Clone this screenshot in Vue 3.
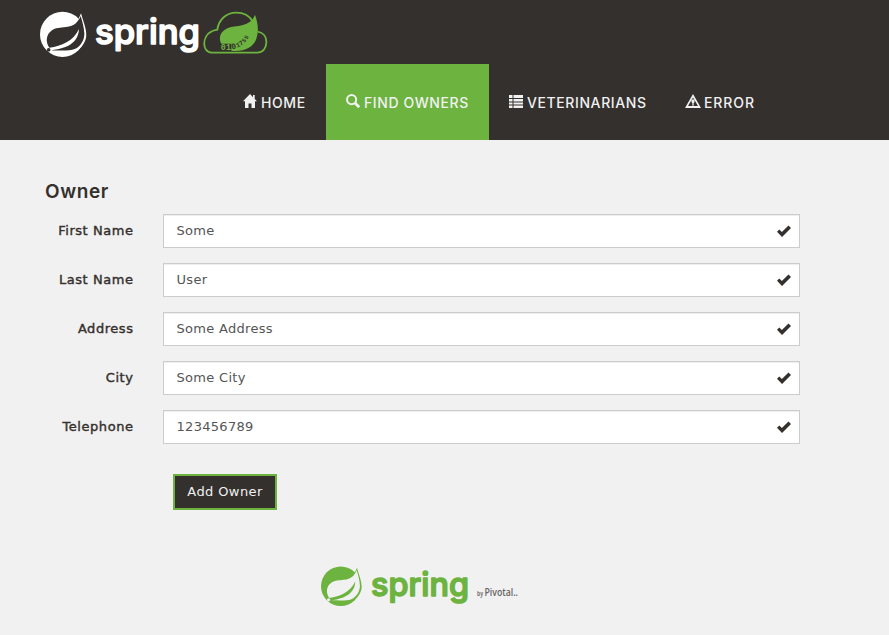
<script setup>
import { ref } from 'vue'

const navItems = [
  { label: 'HOME', icon: 'home' },
  { label: 'FIND OWNERS', icon: 'search', active: true },
  { label: 'VETERINARIANS', icon: 'list' },
  { label: 'ERROR', icon: 'warning' },
]

const fields = ref([
  { id: 'firstName', label: 'First Name', value: 'Some' },
  { id: 'lastName', label: 'Last Name', value: 'User' },
  { id: 'address', label: 'Address', value: 'Some Address' },
  { id: 'city', label: 'City', value: 'Some City' },
  { id: 'telephone', label: 'Telephone', value: '123456789' },
])
</script>

<template>
  <svg class="defs" width="0" height="0" aria-hidden="true">
    <symbol id="leaf" viewBox="0 0 140 140">
      <circle cx="67.500" cy="71" r="67.500" />
      <path d="M123 8 C128 28 139 52 139 74 C137 94 126 109 110 120 L100 60 Z" />
      <path class="leaf-cut" d="M122 16 C114 34 104 46 78 49 C60 51 47 51 35 59 C18 71 16 93 28 111 C65 106 99 92 117 55 C116 80 102 99 76 109 C60 115 45 117 34 119 C62 119 89 121 104 115 C122 106 133 89 133 68 C132 51 127 32 122 16 Z" />
      <circle class="leaf-cut" cx="26" cy="117" r="5.500" />
    </symbol>
  </svg>

  <header class="header">
    <a class="brand">
      <svg class="brand-logo" width="230" height="50" viewBox="0 0 230 50">
        <use class="leaf-light" href="#leaf" x="0" y="0.700" width="46.700" height="46.700" />
        <text class="word word-light" x="55" y="34.300" textLength="105" lengthAdjust="spacingAndGlyphs">spring</text>
        <g class="cloud" transform="translate(150 -5) scale(.33333)">
          <path class="cloud-line" d="M65 143 C33 140 38 91 64 80 C70 76 77 76 82 74 C86 43 110 23 139 23 C161 23 179 34 188 49 M203 80 C220 83 230 96 229 113 C228 131 218 143 202 143 H65" />
          <path class="cloud-leaf" d="M195 29 C187 51 169 60 139 64 C105 67 88 82 90 104 C91 110 92 113 94 116 H124 V137 C160 141 188 128 198 104 C208 78 203 51 195 29 Z" />
          <g class="bits">
            <text x="92" y="136">0</text>
            <text x="108" y="136">1</text>
          </g>
          <g class="bits bits-dark">
            <text class="bit-l" x="125" y="133" transform="rotate(-10 125 133)">0</text>
            <text class="bit-m" x="141" y="128" transform="rotate(-22 141 128)">1</text>
            <text class="bit-m" x="152" y="123" transform="rotate(-36 152 123)">7</text>
            <text class="bit-s" x="163" y="114" transform="rotate(-48 163 114)">5</text>
            <text class="bit-s" x="171" y="104" transform="rotate(-56 171 104)">5</text>
          </g>
        </g>
      </svg>
    </a>
    <nav class="nav">
      <a v-for="item in navItems" :key="item.icon" class="nav-item" :class="[item.icon, { active: item.active }]">
        <svg v-if="item.icon === 'home'" class="icon" viewBox="0 0 14 14"><path d="M7 0 L0 7.300 H2 V14 H5.500 V9.500 H8.500 V14 H12 V7.300 H14 L11.700 4.900 V1 H10 V3.200 Z" /></svg>
        <svg v-else-if="item.icon === 'search'" class="icon" viewBox="0 0 14 14"><circle class="line" cx="5.600" cy="5.600" r="4.600" /><path class="handle" d="M9 9 L13.200 13.200" /></svg>
        <svg v-else-if="item.icon === 'list'" class="icon" viewBox="0 0 14 14"><path d="M0 1h3.500v3H0z M4.500 1H14v3H4.500z M0 5h3.500v2.500H0z M4.500 5H14v2.500H4.500z M0 8.500h3.500v2H0z M4.500 8.500H14v2H4.500z M0 11.500h3.500V14H0z M4.500 11.500H14V14H4.500z" /></svg>
        <svg v-else class="icon" viewBox="0 0 16 14"><path fill-rule="evenodd" d="M8 0 L16 14 H0 Z M8 3.400 L3 12 H13 Z" /><path d="M6.500 5.500h3v2.200L8.700 9.700H7.300L6.500 7.700z M7.100 10.200h1.800v1.300H7.100z" /></svg>
        <span>{{ item.label }}</span>
      </a>
    </nav>
  </header>

  <main class="content">
    <h2>Owner</h2>
    <form class="form" @submit.prevent>
      <div v-for="field in fields" :key="field.id" class="row">
        <label :for="field.id">{{ field.label }}</label>
        <div class="control">
          <input :id="field.id" v-model="field.value" type="text" />
          <svg class="check" viewBox="0 0 14 12"><path d="M0 6.800 L2.300 4.500 L4.900 7 L11.500 .6 L14 3 L5 12 Z" /></svg>
        </div>
      </div>
      <button class="submit" type="submit">Add Owner</button>
    </form>
  </main>

  <footer class="footer">
    <svg width="200" height="48" viewBox="0 0 200 48">
      <use class="leaf-green" href="#leaf" x="0" y="-0.500" width="41" height="41" />
      <text class="word word-green" x="50" y="29.500" textLength="98" lengthAdjust="spacingAndGlyphs">spring</text>
      <text class="by" x="156" y="30" textLength="6" lengthAdjust="spacingAndGlyphs">by</text>
      <text class="pivotal" x="163.500" y="30" textLength="33.500" lengthAdjust="spacingAndGlyphs">Pivotal..</text>
    </svg>
  </footer>
</template>

<style>
body {
  background: #f1f1f1;
}
</style>

<style scoped>
.defs {
  position: absolute;
}
.header {
  height: 140px;
  background: #34302d;
  display: flex;
  flex-direction: column;
  justify-content: space-between;
}
.brand {
  display: block;
  height: 64px;
  padding: 10px 0 0 40px;
  box-sizing: border-box;
}
.brand-logo {
  display: block;
  overflow: visible;
}
.leaf-light {
  fill: #fff;
  --cut: #34302d;
}
.leaf-green {
  fill: #6db33f;
  --cut: #f1f1f1;
}
.leaf-cut {
  fill: var(--cut);
}
.word {
  font-family: Inter, sans-serif;
  font-size: 35px;
  font-weight: 500;
  stroke-width: 1.600px;
  stroke-linejoin: round;
}
.word-light {
  fill: #fff;
  stroke: #fff;
}
.word-green {
  font-size: 33px;
  fill: #6db33f;
  stroke: #6db33f;
}
.cloud-line {
  fill: none;
  stroke: #6db33f;
  stroke-width: 5.500;
}
.cloud-leaf {
  fill: #6db33f;
}
.bits {
  font: bold 25px "Liberation Mono", monospace;
  fill: #6db33f;
}
.bits-dark {
  fill: #34302d;
}
.bit-l {
  font-size: 24px;
}
.bit-m {
  font-size: 20px;
}
.bit-s {
  font-size: 17px;
}
.nav {
  height: 76px;
  display: flex;
  padding-left: 223px;
}
.nav-item {
  display: flex;
  align-items: center;
  gap: 4px;
  box-sizing: border-box;
  padding: 0 0 0 20px;
  color: #f1f1f1;
  font: 500 14px "Inter", sans-serif;
  letter-spacing: 0.600px;
  white-space: nowrap;
}
.nav-item.home {
  width: 103px;
}
.nav-item.search {
  width: 163px;
}
.nav-item.list {
  width: 176px;
}
.nav-item.warning {
  width: 110px;
  gap: 3px;
  letter-spacing: 0.900px;
}
.nav-item.active {
  background: #6db33f;
}
.icon {
  width: 14px;
  height: 14px;
  margin-bottom: 2px;
  fill: #f1f1f1;
  flex: none;
}
.warning .icon {
  width: 16px;
}
.line,
.handle {
  fill: none;
  stroke: #f1f1f1;
  stroke-width: 2;
}
.handle {
  stroke-width: 2.800;
}
.content {
  padding: 40px 89px 0 45px;
}
h2 {
  margin: 0;
  font: 600 19px/23px "Inter", sans-serif;
  color: #34302d;
  letter-spacing: 0.600px;
}
.form {
  margin-top: 11px;
}
.row {
  display: flex;
  align-items: center;
  height: 34px;
  margin-bottom: 15px;
}
label {
  width: 88.500px;
  margin-right: 29.500px;
  padding-bottom: 1px;
  text-align: right;
  color: #34302d;
  font: 13px "DejaVu Sans", sans-serif;
  -webkit-text-stroke: 0.400px #34302d;
  letter-spacing: 0.550px;
  white-space: nowrap;
}
.control {
  flex: 1;
  height: 34px;
  box-sizing: border-box;
  display: flex;
  align-items: center;
  padding: 0 8.500px 0 12.500px;
  background: #fff;
  border: 1px solid #ccc;
  box-shadow: inset 0 1px 1px rgba(0, 0, 0, 0.075);
}
input {
  flex: 1;
  min-width: 0;
  padding: 0 0 1px;
  border: 0;
  outline: 0;
  background: transparent;
  color: #555;
  font: 13px "DejaVu Sans", sans-serif;
  letter-spacing: 0.300px;
}
.check {
  width: 14px;
  height: 12px;
  fill: #34302d;
}
.submit {
  display: block;
  width: 104px;
  height: 36px;
  margin: 30px 0 0 128px;
  padding: 0 0 1px;
  border: 2px solid #6db33f;
  background: #34302d;
  color: #f1f1f1;
  font: 13px "DejaVu Sans", sans-serif;
  letter-spacing: 0.400px;
}
.footer {
  padding: 56px 0 0 321px;
}
.footer svg {
  display: block;
  overflow: visible;
}
.by {
  font: bold 7px "Open Sans", sans-serif;
  fill: #777;
}
.pivotal {
  font: 600 10px "Open Sans", sans-serif;
  fill: #666;
}
</style>
